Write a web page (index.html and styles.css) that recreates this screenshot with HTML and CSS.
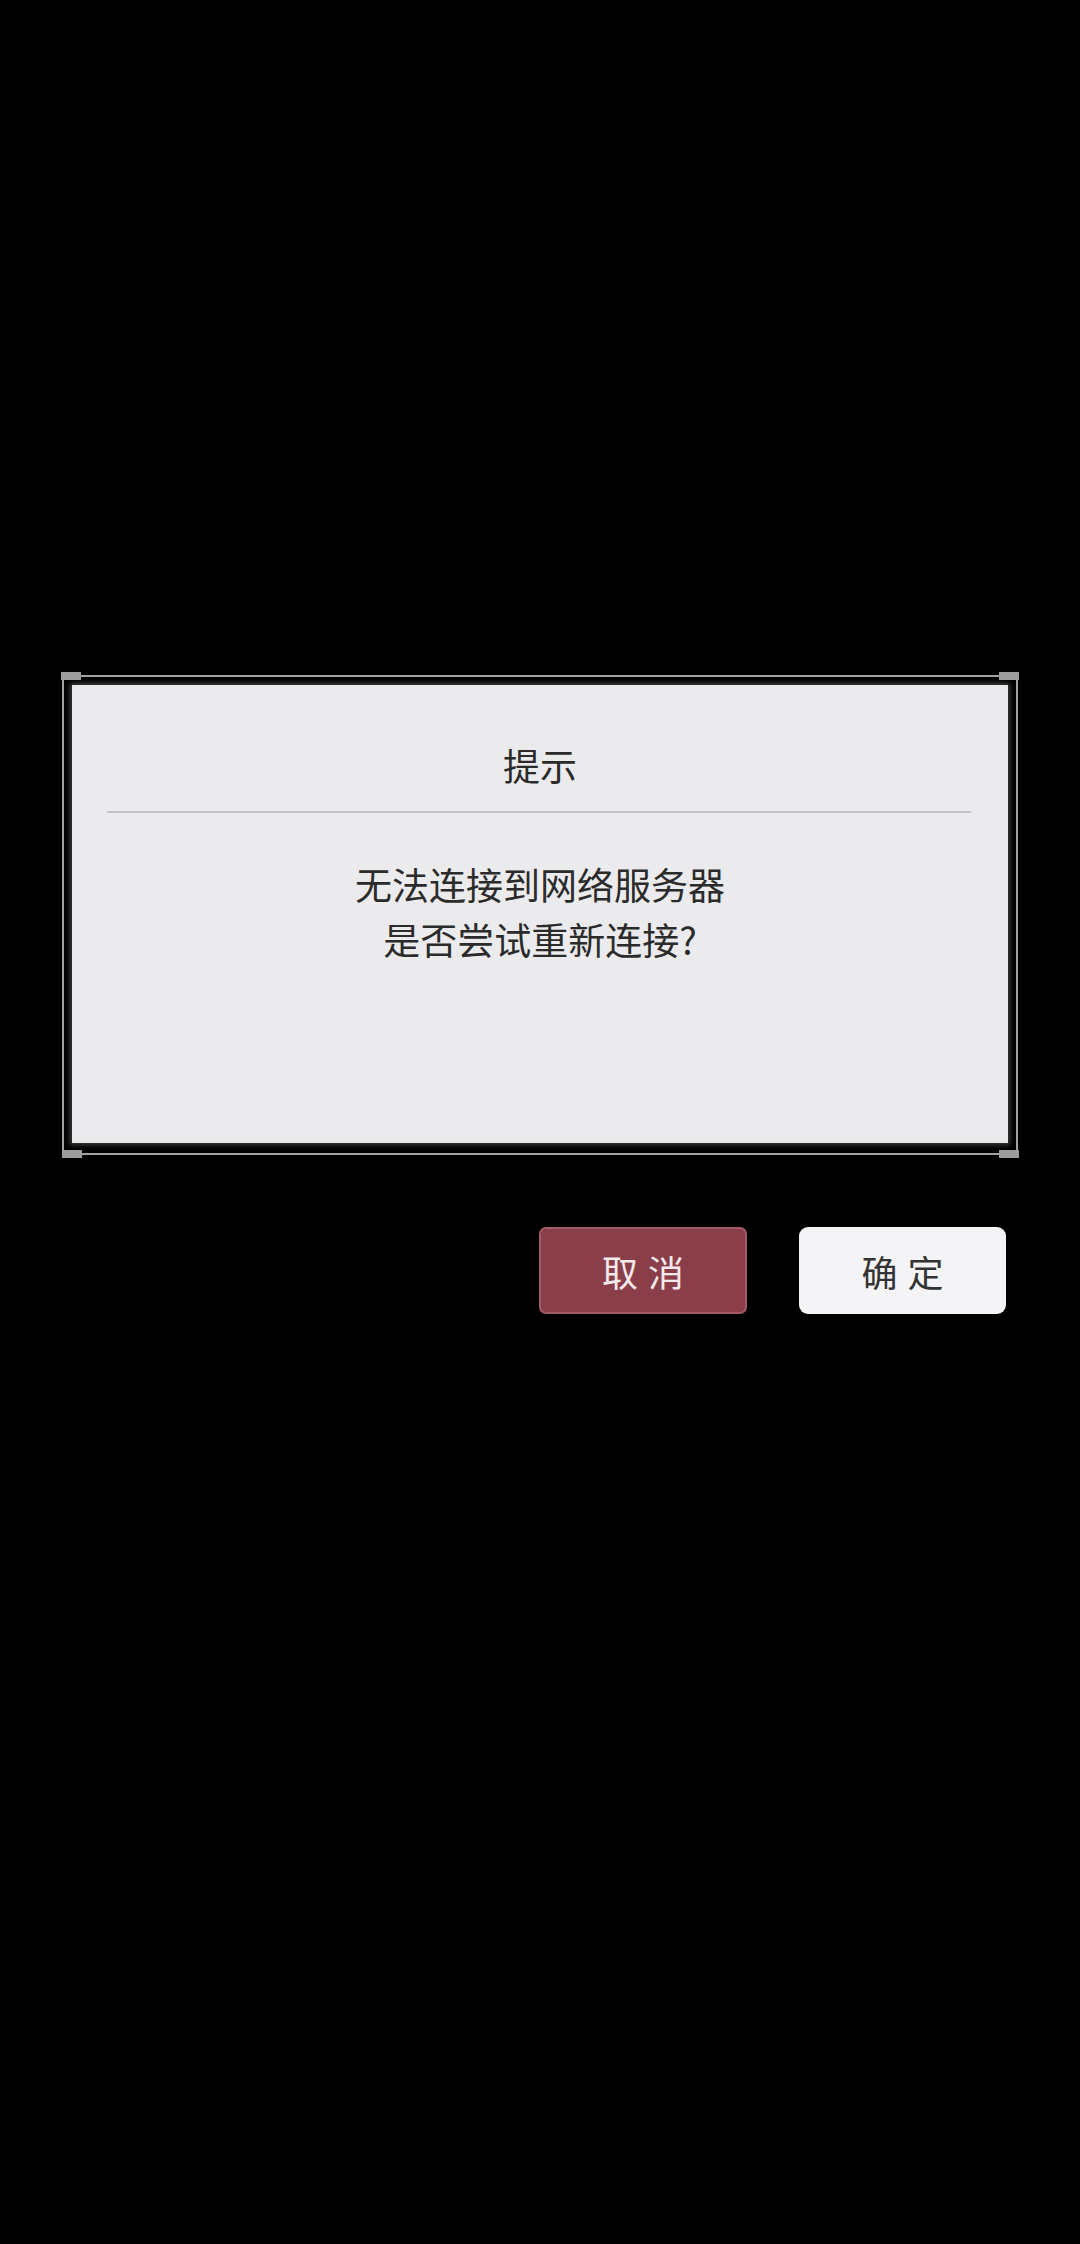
FILE: index.html
```html
<!DOCTYPE html>
<html lang="zh-CN">
<head>
<meta charset="utf-8">
<title>提示</title>
<link rel="stylesheet" href="styles.css">
</head>
<body>
<div class="frame">
  <span class="corner tl"></span>
  <span class="corner tr"></span>
  <span class="corner bl"></span>
  <span class="corner br"></span>
  <div class="panel">
    <div class="title">提示</div>
    <div class="divider"></div>
    <div class="message">无法连接到网络服务器<br>是否尝试重新连接?</div>
  </div>
</div>
<div class="actions">
  <button class="btn cancel">取消</button>
  <button class="btn confirm">确定</button>
</div>
</body>
</html>
```

FILE: styles.css
```css
html {
  background: #000;
}
body {
  margin: 0;
  width: 1080px;
  min-height: 2244px;
  background: #000;
  font-family: "Noto Sans CJK SC", "Noto Sans", sans-serif;
}
.frame {
  position: relative;
  margin: 675px 62px 0 62px;
  border: 2px solid #a2a2a2;
  padding: 8px 8px 10px 8px;
  background: #000;
}
.corner {
  position: absolute;
  width: 20px;
  height: 8px;
  background: #9c9c9c;
}
.corner.tl { left: -3px; top: -5px; }
.corner.tr { right: -3px; top: -5px; }
.corner.bl { left: -2px; bottom: -5px; }
.corner.br { right: -3px; bottom: -5px; }
.panel {
  height: 458px;
  background: #ebebed;
  box-shadow: 0 0 5px 2px rgba(90, 90, 90, 0.7);
  padding-top: 55px;
  box-sizing: border-box;
  text-align: center;
  color: #2b2b2b;
}
.title {
  font-size: 37px;
  line-height: 50px;
}
.divider {
  height: 2px;
  background: #c2c2c4;
  margin: 21px 37px 0 35px;
}
.message {
  margin-top: 44px;
  font-size: 37px;
  line-height: 55px;
}
.actions {
  display: flex;
  justify-content: flex-end;
  gap: 52px;
  padding-right: 74px;
  margin-top: 72px;
}
.btn {
  width: 208px;
  height: 87px;
  font-family: "Noto Sans CJK SC", "Noto Sans", sans-serif;
  font-size: 36px;
  letter-spacing: 10px;
  text-indent: 10px;
  box-sizing: border-box;
  padding: 0;
}
.cancel {
  background: #8a3e49;
  border: 2px solid #a45a65;
  border-radius: 7px;
  color: #f3e9ea;
}
.confirm {
  width: 207px;
  background: #f4f4f6;
  border: none;
  border-radius: 9px;
  color: #333;
}
```
